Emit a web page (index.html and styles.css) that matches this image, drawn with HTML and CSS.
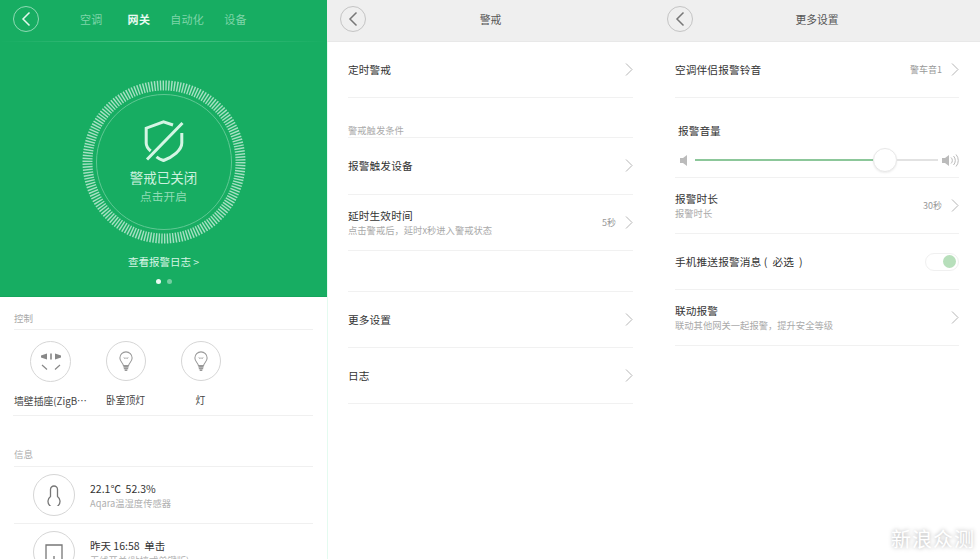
FILE: index.html
```html
<!DOCTYPE html>
<html lang="zh-CN">
<head>
    <meta charset="UTF-8">
    <title>警戒</title>
    <link rel="stylesheet" href="styles.css">
</head>
<body>
  <svg class="icon-defs" width="0" height="0">
    <symbol id="chevron" viewBox="0 0 8 13"><path d="M1 .5l6 6-6 6" fill="none" stroke="currentColor"/></symbol>
    <symbol id="back" viewBox="0 0 10 16"><path d="M8.500 1.500L2 8l6.500 6.500" fill="none" stroke="currentColor" stroke-width="1.500"/></symbol>
    <symbol id="bulb" viewBox="0 0 16 24">
      <path d="M5 16.500C4.500 13.500 1 12 1 8a7 7 0 0 1 14 0c0 4-3.500 5.500-4 8.500z" fill="none" stroke="currentColor" stroke-width="1.200"/>
      <path d="M5.500 7l1.200 2L8 7.500 9.300 9l1.200-2" fill="none" stroke="currentColor" stroke-width=".8"/>
      <path d="M5 18h6M5.500 20h5M6.500 22h3" fill="none" stroke="currentColor" stroke-width="1.500"/>
    </symbol>
  </svg>

  <!-- 网关 -->
  <section class="panel">
    <div class="hero">
      <nav class="tab-bar">
        <a class="back-btn back-btn-light"><svg width="10" height="16"><use href="#back"/></svg></a>
        <div class="tabs">
          <span class="tab tab-first">空调</span>
          <span class="tab tab-active">网关</span>
          <span class="tab">自动化</span>
          <span class="tab">设备</span>
        </div>
      </nav>

      <div class="ring">
        <svg class="ring-art" width="164" height="164" viewBox="0 0 164 164">
          <circle class="ring-ticks" cx="82" cy="82" r="76.500" pathLength="340"/>
          <circle class="ring-line" cx="82" cy="82" r="67.500"/>
        </svg>
        <div class="ring-text">
          <svg class="shield" width="40" height="42" viewBox="0 0 40 42">
            <path d="M29 5L19.500 1.800 2.200 8.200V23c0 3 1.500 5.500 4.500 8M37.800 13v10c0 7-9 14-18.300 17.500-2.500-.8-5-2-7-3.700M3 39.500L38.500 3"/>
          </svg>
          <div class="ring-title">警戒已关闭</div>
          <div class="ring-sub">点击开启</div>
        </div>
      </div>

      <div class="log-link">查看报警日志 &gt;</div>
      <div class="dots"><i class="dot dot-on"></i><i class="dot"></i></div>
    </div>

    <div class="home-list">
      <div class="home-label home-label-first">控制</div>
      <div class="controls">
        <div class="control">
          <div class="round-icon round-icon-big">
            <svg width="22" height="18" viewBox="0 0 22 18">
              <path class="socket-fill" d="M1 2.500L7 .5v6l-6-2zM21 2.500L15 .5v6l6-2zM10.200 .5h1.600v6h-1.600z"/>
              <path class="socket-line" d="M2 12l5 4.500M20 12l-5 4.500"/>
            </svg>
          </div>
          <div class="control-name">墙壁插座(ZigB…</div>
        </div>
        <div class="control">
          <div class="round-icon"><svg class="bulb" width="14" height="21"><use href="#bulb"/></svg></div>
          <div class="control-name">卧室顶灯</div>
        </div>
        <div class="control">
          <div class="round-icon"><svg class="bulb" width="14" height="21"><use href="#bulb"/></svg></div>
          <div class="control-name">灯</div>
        </div>
      </div>

      <div class="home-label home-label-info">信息</div>
      <div class="info-row">
        <div class="round-icon round-icon-info">
          <svg width="14" height="21" viewBox="0 0 14 21">
            <path class="info-stroke" d="M3.500 11.500V4.500a3.500 3.500 0 0 1 7 0v7a6 6 0 1 1-7 0z"/>
          </svg>
        </div>
        <div class="info-text">
          <div class="info-main">22.1℃&nbsp;&nbsp;52.3%</div>
          <div class="info-sub">Aqara温湿度传感器</div>
        </div>
      </div>
      <div class="info-row">
        <div class="round-icon round-icon-info">
          <svg class="switch-icon" width="18" height="20" viewBox="0 0 18 20">
            <path class="info-stroke" d="M1 1h16v18H1zM9 12v3"/>
          </svg>
        </div>
        <div class="info-text">
          <div class="info-main">昨天 16:58&nbsp;&nbsp;单击</div>
          <div class="info-sub">无线开关(贴墙式单键版)</div>
        </div>
      </div>
    </div>
  </section>

  <!-- 警戒 -->
  <section class="panel panel-mid">
    <header class="title-bar">
      <a class="back-btn"><svg width="10" height="16"><use href="#back"/></svg></a>
      <span>警戒</span>
    </header>
    <div class="rows">
      <div class="row">
        <div class="row-text"><div class="row-title">定时警戒</div></div>
        <svg class="chev" width="8" height="13"><use href="#chevron"/></svg>
      </div>
      <div class="group-label">警戒触发条件</div>
      <div class="row row-tall">
        <div class="row-text"><div class="row-title">报警触发设备</div></div>
        <svg class="chev" width="8" height="13"><use href="#chevron"/></svg>
      </div>
      <div class="row">
        <div class="row-text">
          <div class="row-title">延时生效时间</div>
          <div class="row-sub">点击警戒后，延时x秒进入警戒状态</div>
        </div>
        <span class="row-value">5秒</span>
        <svg class="chev" width="8" height="13"><use href="#chevron"/></svg>
      </div>
      <div class="row-gap"></div>
      <div class="row">
        <div class="row-text"><div class="row-title">更多设置</div></div>
        <svg class="chev" width="8" height="13"><use href="#chevron"/></svg>
      </div>
      <div class="row">
        <div class="row-text"><div class="row-title">日志</div></div>
        <svg class="chev" width="8" height="13"><use href="#chevron"/></svg>
      </div>
    </div>
  </section>

  <!-- 更多设置 -->
  <section class="panel panel-right">
    <header class="title-bar">
      <a class="back-btn"><svg width="10" height="16"><use href="#back"/></svg></a>
      <span>更多设置</span>
    </header>
    <div class="rows">
      <div class="row">
        <div class="row-text"><div class="row-title">空调伴侣报警铃音</div></div>
        <span class="row-value">警车音1</span>
        <svg class="chev" width="8" height="13"><use href="#chevron"/></svg>
      </div>
      <div class="volume">
        <div class="volume-title">报警音量</div>
        <div class="slider">
          <svg class="speaker" width="7" height="11" viewBox="0 0 7 11"><path d="M0 3h3l4-3v11L3 8H0z"/></svg>
          <div class="track">
            <div class="track-fill"></div>
            <div class="thumb"></div>
            <div class="track-rest"></div>
          </div>
          <svg class="speaker speaker-loud" width="17" height="13" viewBox="0 0 17 13">
            <path d="M0 4h3l4-3v11L3 9H0z"/>
            <path class="speaker-wave" d="M9 3.500a4 4 0 0 1 0 6M11.500 2a6.500 6.500 0 0 1 0 9M14 .5a9 9 0 0 1 0 12"/>
          </svg>
        </div>
      </div>
      <div class="row">
        <div class="row-text">
          <div class="row-title">报警时长</div>
          <div class="row-sub">报警时长</div>
        </div>
        <span class="row-value">30秒</span>
        <svg class="chev" width="8" height="13"><use href="#chevron"/></svg>
      </div>
      <div class="row">
        <div class="row-text"><div class="row-title">手机推送报警消息 (&nbsp;&nbsp;必选&nbsp;&nbsp;)</div></div>
        <div class="toggle"><i class="toggle-knob"></i></div>
      </div>
      <div class="row">
        <div class="row-text">
          <div class="row-title">联动报警</div>
          <div class="row-sub">联动其他网关一起报警，提升安全等级</div>
        </div>
        <svg class="chev" width="8" height="13"><use href="#chevron"/></svg>
      </div>
    </div>
  </section>

  <div class="watermark">新浪众测</div>
</body>
</html>
```

FILE: styles.css
```css
* {
  box-sizing: border-box;
  margin: 0;
  padding: 0;
}

body {
  position: relative;
  display: flex;
  width: 980px;
  height: 559px;
  overflow: hidden;
  background-color: #fff;
  font-family: "Noto Sans CJK SC", "Liberation Sans", sans-serif;
  color: #333;
}

.icon-defs {
  position: absolute;
}

.panel {
  flex: 0 0 327px;
  height: 559px;
  overflow: hidden;
}

.panel-mid .rows {
  box-shadow: inset 1px 0 0 #e4fbf0;
}

.panel-right {
  flex-basis: 326px;
}

/* 返回按钮 */
.back-btn {
  display: flex;
  align-items: center;
  justify-content: center;
  flex: none;
  width: 26px;
  height: 26px;
  border: 1px solid #c4c4c4;
  border-radius: 50%;
  color: #777;
}

.back-btn-light {
  border-color: #8fdab4;
  color: #e4f8ee;
}

/* 绿色顶部区域 */
.hero {
  display: flex;
  flex-direction: column;
  align-items: center;
  height: 297px;
  background-color: #17ad62;
  border-bottom: 1px solid #14a55c;
}

.tab-bar {
  display: flex;
  align-items: center;
  flex: none;
  width: 100%;
  height: 42px;
  padding: 0 0 4px 13px;
  border-bottom: 1px solid;
  border-image: linear-gradient(90deg, #17ad62, #4cc287 50%, #17ad62) 1;
}

.tabs {
  display: flex;
  gap: 20px;
  margin-left: 41px;
}

.tab {
  font-size: 11px;
  letter-spacing: .3px;
  color: #7fd5a9;
}

.tab-first {
  margin-right: 5px;
}

.tab-active {
  font-weight: 700;
  color: #e8faf1;
}

.ring {
  display: grid;
  flex: none;
  width: 164px;
  height: 164px;
  margin-top: 38px;
}

.ring-art,
.ring-text {
  grid-area: 1 / 1;
}

.ring-ticks {
  fill: none;
  stroke: #a5e0c2;
  stroke-width: 10;
  stroke-dasharray: 1 1;
}

.ring-line {
  fill: none;
  stroke: #5fc893;
  stroke-width: 1;
}

.ring-text {
  display: flex;
  flex-direction: column;
  align-items: center;
  padding-top: 40px;
}

.shield {
  flex: none;
  fill: none;
  stroke: #d4f5e4;
  stroke-width: 3;
}

.ring-title {
  margin-top: 5px;
  font-size: 13.500px;
  line-height: 20px;
  color: #cdf1df;
}

.ring-sub {
  font-size: 11.700px;
  line-height: 17px;
  color: #8fdcb5;
}

.log-link {
  margin-top: 10px;
  font-size: 10.500px;
  line-height: 16px;
  color: #d8f5e6;
}

.dots {
  display: flex;
  gap: 6px;
  margin-top: 9px;
}

.dot {
  width: 5px;
  height: 5px;
  border-radius: 50%;
  background-color: #74cfa1;
}

.dot-on {
  background-color: #eafaf2;
}

/* 控制和信息 */
.home-list {
  padding: 0 14px;
}

.home-label {
  display: flex;
  align-items: flex-end;
  padding-bottom: 4px;
  border-bottom: 1px solid #f0f0f0;
  font-size: 9.500px;
  line-height: 14px;
  color: #aaa;
}

.home-label-first {
  height: 33px;
}

.home-label-info {
  height: 51px;
  padding-bottom: 5px;
}

.controls {
  display: flex;
  height: 86px;
  margin-left: -1px;
  padding-top: 11px;
  border-bottom: 1px solid #f0f0f0;
}

.control {
  display: flex;
  flex-direction: column;
  align-items: center;
  width: 75px;
}

.control-name {
  margin-top: 12px;
  font-size: 9.800px;
  line-height: 15px;
  white-space: nowrap;
  color: #444;
}

.round-icon {
  display: flex;
  align-items: center;
  justify-content: center;
  flex: none;
  width: 40px;
  height: 40px;
  border: 1px solid #d6d6d6;
  border-radius: 50%;
}

.round-icon-big {
  width: 41px;
  height: 41px;
}

.round-icon-info {
  width: 42px;
  height: 42px;
}

.bulb {
  color: #999;
}

.socket-fill {
  fill: #888;
}

.socket-line {
  fill: none;
  stroke: #888;
  stroke-width: 1.200;
}

.info-stroke {
  fill: none;
  stroke: #777;
  stroke-width: 1.300;
}

.switch-icon {
  margin-top: 4px;
}

.info-row {
  display: flex;
  align-items: center;
  gap: 15px;
  height: 57px;
  padding-left: 19px;
  border-bottom: 1px solid #f0f0f0;
}

.info-text {
  padding-top: 2px;
}

.info-main {
  font-size: 10.500px;
  line-height: 14px;
  color: #333;
}

.info-sub {
  font-size: 9.300px;
  line-height: 14px;
  white-space: nowrap;
  color: #b0b0b0;
}

/* 标题栏 */
.title-bar {
  display: flex;
  align-items: center;
  position: relative;
  height: 42px;
  padding: 0 0 4px 13px;
  background-color: #efefef;
  border-bottom: 1px solid #e8e8e8;
}

.title-bar span {
  position: absolute;
  left: 0;
  right: 0;
  top: 11px;
  font-size: 10.800px;
  line-height: 16px;
  text-align: center;
  color: #555;
}

/* 设置列表 */
.rows {
  padding: 0 21px;
  height: 517px;
}

.row {
  display: flex;
  align-items: center;
  height: 56px;
  border-bottom: 1px solid #f1f1f1;
}

.row-tall {
  height: 57px;
  padding-bottom: 1px;
}

.row-text {
  flex: 1;
}

.row-title {
  font-size: 10.700px;
  line-height: 15px;
  letter-spacing: .1px;
  color: #333;
}

.row-sub {
  font-size: 9.300px;
  line-height: 14px;
  color: #aaa;
}

.row-value {
  margin-right: 9px;
  font-size: 9px;
  line-height: 14px;
  color: #999;
}

.chev {
  flex: none;
  color: #b5b5b5;
}

.group-label {
  display: flex;
  align-items: flex-end;
  height: 40px;
  border-bottom: 1px solid #f1f1f1;
  font-size: 9.300px;
  line-height: 14px;
  color: #aaa;
}

.row-gap {
  height: 41px;
  border-bottom: 1px solid #f1f1f1;
}

/* 音量 */
.volume {
  height: 80px;
  padding-top: 25px;
  border-bottom: 1px solid #f1f1f1;
}

.volume-title {
  padding-left: 3px;
  font-size: 10.700px;
  line-height: 15px;
  color: #333;
}

.slider {
  display: flex;
  align-items: center;
  height: 24px;
  margin-top: 10px;
  padding-left: 5px;
}

.speaker {
  flex: none;
  fill: #bbb;
}

.speaker-loud {
  margin-left: auto;
}

.speaker-wave {
  fill: none;
  stroke: #bbb;
}

.track {
  display: flex;
  align-items: center;
  width: 243px;
  margin-left: 8px;
}

.track-fill {
  width: 178px;
  height: 2px;
  background-color: #8cc79a;
}

.track-rest {
  flex: 1;
  height: 2px;
  background-color: #e2e2e2;
}

.thumb {
  flex: none;
  width: 24px;
  height: 24px;
  border: 1px solid #e8e8e8;
  border-radius: 50%;
  background-color: #fff;
  box-shadow: 0 1px 2px rgba(0,0,0,0.08);
}

/* 开关 */
.toggle {
  display: flex;
  align-items: center;
  justify-content: flex-end;
  width: 34px;
  height: 18px;
  padding-right: 2px;
  border: 1px solid #f0f0f0;
  border-radius: 9px;
}

.toggle-knob {
  width: 13px;
  height: 13px;
  border-radius: 50%;
  background-color: #b7dfbb;
}

/* 水印 */
.watermark {
  position: absolute;
  right: 5px;
  bottom: 7px;
  font-size: 20px;
  line-height: 26px;
  letter-spacing: 1px;
  color: #fff;
  text-shadow: 0 0 4px #aaa;
}
```
